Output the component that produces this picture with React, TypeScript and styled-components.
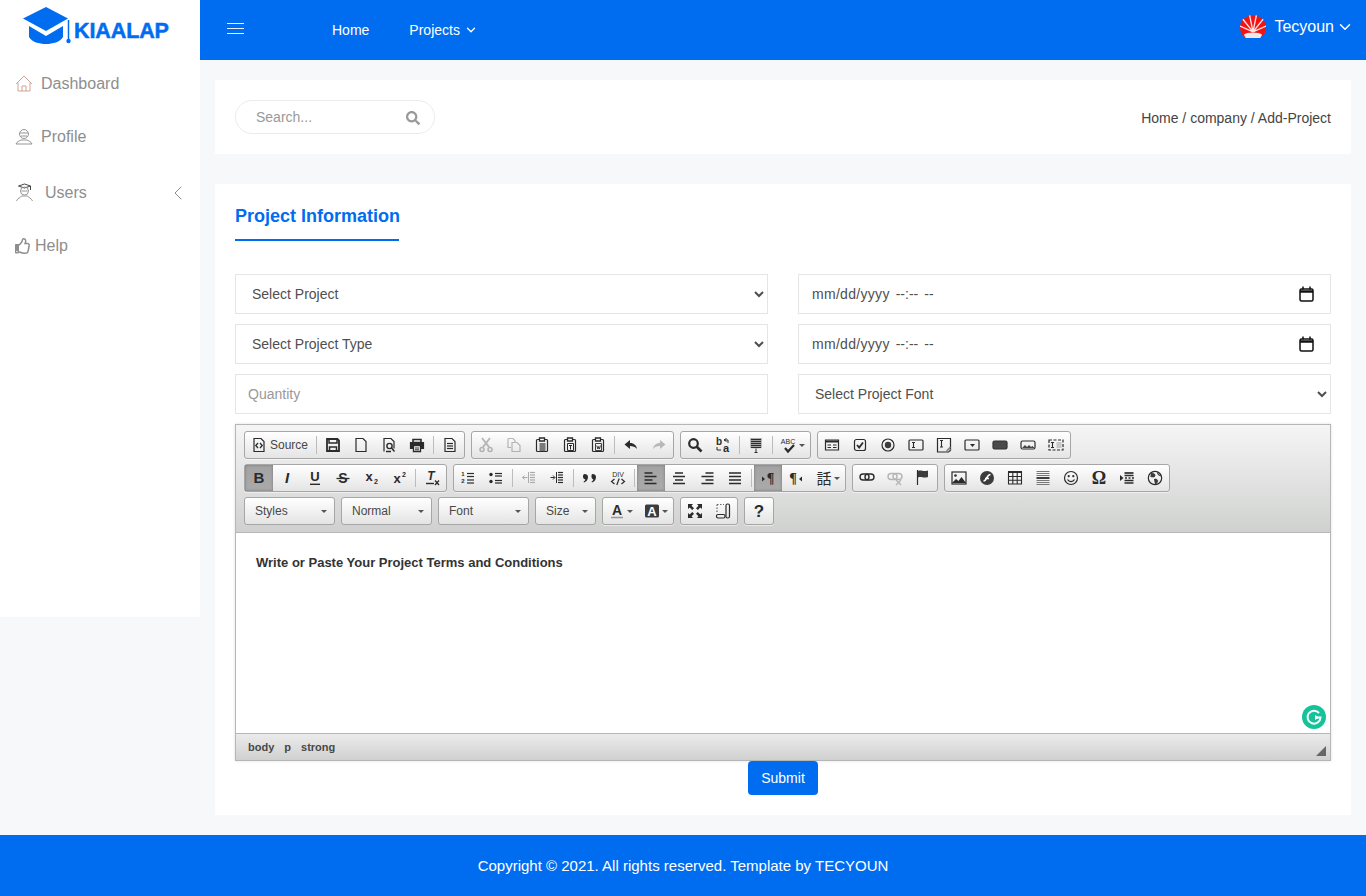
import React from "react";
import styled, { createGlobalStyle } from "styled-components";
import { FaSearch, FaRegThumbsUp } from "react-icons/fa";
import { ChevronDown, ChevronLeft } from "lucide-react";

const GlobalStyle = createGlobalStyle`
	* {
		box-sizing: border-box;
	}
	body {
		margin: 0;
		background-color: #f6f8fa;
		font-family: "Liberation Sans", Arial, sans-serif;
	}
`;

const Layout = styled.div`
	display: grid;
	grid-template-columns: 200px 1fr;
	height: 835px;
`;

const Sidebar = styled.aside`
	height: 617px;
	background-color: #fff;
`;

const LogoBox = styled.div`
	display: flex;
	align-items: center;
	height: 56px;
	padding-left: 22px;
`;

const LogoText = styled.span`
	font-size: 21.5px;
	font-weight: 700;
	color: #006df0;
	letter-spacing: -0.1px;
	margin-top: 7px;
	-webkit-text-stroke: 0.5px #006df0;
`;

const SideItem = styled.a<{ $h: number; $gap: number }>`
	display: flex;
	align-items: center;
	height: ${(p) => p.$h}px;
	padding: 0 15px;
	gap: ${(p) => p.$gap}px;
	font-size: 16px;
	color: #8e8e8e;
`;

const Caret = styled.span`
	margin-left: auto;
	display: flex;
	margin-right: -5px;
	color: #8e8e8e;
`;

const TopBar = styled.header`
	display: flex;
	align-items: center;
	height: 60px;
	padding: 0 15px 0 27px;
	background-color: #006df0;
	color: #fff;
`;

const Burger = styled.span`
	display: block;
	position: relative;
	width: 17px;
	height: 11px;
	margin: -3px 88px 0 0;
	border-top: 1px solid #e6f0fe;
	border-bottom: 1px solid #e6f0fe;
	&::after {
		content: "";
		position: absolute;
		left: 0;
		right: 0;
		top: 4px;
		height: 1px;
		background: #e6f0fe;
	}
`;

const NavLink = styled.a`
	display: flex;
	align-items: center;
	gap: 4px;
	margin-right: 40px;
	font-size: 14px;
	color: #fff;
`;

const User = styled.div`
	display: flex;
	align-items: center;
	margin: -6px -3px 0 auto;
	font-size: 16px;
	gap: 8px;
	svg:last-child {
		margin-left: -6px;
	}
`;

const Main = styled.main`
	padding: 20px 15px;
`;

const SearchCard = styled.section`
	display: flex;
	align-items: center;
	justify-content: space-between;
	height: 74px;
	padding: 0 20px;
	margin-bottom: 30px;
	background-color: #fff;
`;

const SearchBox = styled.div`
	display: flex;
	align-items: center;
	justify-content: space-between;
	width: 200px;
	height: 34px;
	padding: 0 14px 0 20px;
	border: 1px solid #ececec;
	border-radius: 17px;
	font-size: 14px;
	color: #999;
	svg {
		margin-top: 2px;
	}
`;

const SearchInput = styled.input`
	width: 130px;
	border: 0;
	outline: 0;
	padding: 0;
	font: inherit;
	&::placeholder {
		color: #999;
		opacity: 1;
	}
`;

const Crumbs = styled.div`
	margin-top: 2px;
	font-size: 14px;
	color: #444;
`;

const FormCard = styled.section`
	height: 631px;
	padding: 20px;
	background-color: #fff;
`;

const Title = styled.h2`
	width: 164px;
	margin: 0 0 33px;
	padding: 2px 0 14px;
	height: 37px;
	border-bottom: 2px solid #006df0;
	font-size: 18px;
	line-height: 21px;
	font-weight: 700;
	white-space: nowrap;
	color: #006df0;
`;

const FormGrid = styled.div`
	display: grid;
	grid-template-columns: 1fr 1fr;
	column-gap: 30px;
	row-gap: 10px;
`;

const fieldCss = `
	width: 100%;
	height: 40px;
	border: 1px solid #e5e5e5;
	background-color: #fff;
	font-family: "Liberation Sans", Arial, sans-serif;
	font-size: 14px;
	color: #4f4f4f;
	outline: 0;
`;

const Select = styled.select`
	${fieldCss}
	padding: 0 8px 0 12px;
`;

const Input = styled.input`
	${fieldCss}
	padding: 0 12px;
	&::placeholder {
		color: #999;
		opacity: 1;
	}
`;

const DateField = styled.div`
	${fieldCss}
	display: flex;
	align-items: center;
	gap: 6px;
	padding: 0 16px 0 13px;
	svg {
		margin-left: auto;
	}
`;

const DateMask = styled.span`
	letter-spacing: 0.3px;
`;

const Editor = styled.div`
	margin-top: 10px;
	height: 337px;
	display: flex;
	flex-direction: column;
	border: 1px solid #b6b6b6;
	box-shadow: 0 0 3px rgba(0, 0, 0, 0.12);
`;

const Toolbar = styled.div`
	display: flex;
	flex-direction: column;
	gap: 5px;
	height: 108px;
	padding: 6px 8px 0;
	border-bottom: 1px solid #b6b6b6;
	background: linear-gradient(#f5f5f5, #cfd1cf);
`;

const ToolRow = styled.div`
	display: flex;
	gap: 6px;
`;

const Group = styled.div`
	display: flex;
	height: 28px;
	border: 1px solid #a6a6a6;
	border-radius: 3px;
	background: linear-gradient(#fff, #e4e4e4);
	box-shadow: 0 1px 0 rgba(255, 255, 255, 0.5);
`;

const ToolButton = styled.a<{ $w?: number; $active?: boolean; $off?: boolean }>`
	display: flex;
	align-items: center;
	justify-content: center;
	gap: 3px;
	width: ${(p) => p.$w ?? 28}px;
	height: 26px;
	font-size: 12px;
	color: #484848;
	background: ${(p) => (p.$active ? "linear-gradient(#a3a3a3, #a9aaa9)" : "none")};
	box-shadow: ${(p) => (p.$active ? "inset 0 0 3px rgba(0,0,0,.3)" : "none")};
	opacity: ${(p) => (p.$off ? 0.3 : 1)};
	svg {
		overflow: visible;
	}
`;

const Sep = styled.span`
	width: 1px;
	height: 18px;
	margin: 4px 2px;
	background-color: #bcbcbc;
`;

const Combo = styled.a<{ $w: number }>`
	display: flex;
	align-items: center;
	justify-content: space-between;
	width: ${(p) => p.$w}px;
	height: 28px;
	padding: 0 7px 0 10px;
	border: 1px solid #a6a6a6;
	border-radius: 3px;
	background: linear-gradient(#fff, #e4e4e4);
	font-size: 12px;
	color: #484848;
	&::after {
		content: "";
		border: 3px solid transparent;
		border-top-color: #555;
		border-bottom-width: 0;
	}
`;

const Arrow = styled.span`
	margin-left: -1px;
	border: 3px solid transparent;
	border-top-color: #555;
	border-bottom-width: 0;
`;

const Content = styled.div`
	position: relative;
	flex: 1;
	padding: 20px;
	background-color: #fff;
	font-size: 13px;
	line-height: 20px;
	font-weight: 700;
	color: #333;
`;

const Badge = styled.svg`
	position: absolute;
	right: 4px;
	bottom: 4px;
`;

const PathBar = styled.div`
	position: relative;
	display: flex;
	align-items: center;
	gap: 10px;
	height: 27px;
	padding: 0 12px;
	border-top: 1px solid #b6b6b6;
	background: linear-gradient(#ebebeb, #cfd1cf);
	font-size: 11px;
	font-weight: 700;
	color: #484848;
`;

const Grip = styled.span`
	position: absolute;
	right: 4px;
	bottom: 4px;
	border-style: solid;
	border-width: 0 0 10px 10px;
	border-color: transparent transparent #666 transparent;
`;

const SubmitRow = styled.div`
	display: flex;
	justify-content: center;
`;

const Submit = styled.button`
	width: 70px;
	height: 34px;
	border: 0;
	border-radius: 4px;
	background-color: #006df0;
	font-family: inherit;
	font-size: 14px;
	color: #fff;
`;

const Footer = styled.footer`
	display: flex;
	align-items: center;
	justify-content: center;
	height: 61px;
	background-color: #006df0;
	font-size: 15px;
	color: #fff;
`;

const Svg = ({ children, size = 16 }: { children: React.ReactNode; size?: number }) => (
	<svg width={size} height={size} viewBox="0 0 16 16" fill="none" stroke="#2b2b2b" strokeWidth="1.2">
		{children}
	</svg>
);

const serif = "Liberation Serif, serif";
const sans = "Liberation Sans, sans-serif";

const Glyph = ({ t, italic, font = sans, size = 14, x = 8, y = 13, weight = 700 }: { t: string; italic?: boolean; font?: string; size?: number; x?: number; y?: number; weight?: number }) => (
	<text x={x} y={y} textAnchor="middle" fontFamily={font} fontSize={size} fontWeight={weight} fontStyle={italic ? "italic" : "normal"} fill="#2b2b2b" stroke="none">
		{t}
	</text>
);

const Lines = ({ rows, x1, x2 }: { rows: number[]; x1: number; x2: number }) => (
	<>
		{rows.map((y) => (
			<path key={y} d={`M${x1} ${y}H${x2}`} />
		))}
	</>
);

const clipboard = "M5 2.5H3.5c-.8 0-1 .5-1 1v10c0 .5.2 1 1 1h9c.8 0 1-.5 1-1v-10c0-.5-.2-1-1-1H11";

const icons: Record<string, React.ReactNode> = {
	source: (
		<>
			<path d="M3 1.5h7l3 3v10H3z" />
			<path d="M7 6L4.8 8.5 7 11M9 6l2.2 2.5L9 11" strokeWidth="1.3" />
		</>
	),
	save: (
		<>
			<path d="M2 2h10.5L14 3.5V14H2z" strokeWidth="1.8" />
			<path d="M4 2v4h8V2M4.5 14V10h7v4" strokeWidth="1.5" />
		</>
	),
	page: <path d="M3 1.5h7l3 3v10H3z" />,
	preview: (
		<>
			<path d="M3 14.5v-13h7l3 3v7" />
			<circle cx="8.5" cy="9" r="2.6" strokeWidth="1.4" />
			<path d="M10.5 11l3 3.5M5 14.5h5" strokeWidth="1.5" />
		</>
	),
	print: (
		<>
			<path d="M4 2.5h8v3H4z" strokeWidth="1.6" />
			<path d="M1.5 5.5h13v6h-13z" fill="#2b2b2b" />
			<path d="M4.5 8.5h7v6h-7z" fill="#fff" strokeWidth="1.4" />
			<path d="M6 11h4M6 12.8h4" strokeWidth="1" />
		</>
	),
	templates: (
		<>
			<path d="M3 1.5h7l3 3v10H3z" />
			<Lines rows={[6.5, 9, 11.5]} x1={5} x2={11} />
		</>
	),
	cut: (
		<>
			<path d="M4 1l7 9M12 1L5 10" strokeWidth="2" />
			<circle cx="4" cy="12.5" r="2" strokeWidth="1.5" />
			<circle cx="12" cy="12.5" r="2" strokeWidth="1.5" />
		</>
	),
	copy: (
		<>
			<path d="M2 1.5h5l2 2V5M2 1.5v9h3" />
			<path d="M6 5.5h5l3 3v6H6z" />
		</>
	),
	paste: (
		<>
			<path d={clipboard} />
			<path d="M5.5 1h5v3h-5z" fill="#fff" strokeWidth="1.3" />
			<Lines rows={[7, 9, 11, 13]} x1={5.5} x2={11.5} />
		</>
	),
	pasteText: (
		<>
			<path d={clipboard} />
			<path d="M5.5 1h5v3h-5z" fill="#fff" strokeWidth="1.3" />
			<path d="M5.5 6.5h6v7h-6zM7 8.5h3M8.5 8.5v4" strokeWidth="1" />
		</>
	),
	pasteWord: (
		<>
			<path d={clipboard} />
			<path d="M5.5 1h5v3h-5z" fill="#fff" strokeWidth="1.3" />
			<path d="M5.5 6.5h6v7h-6zM6.8 8.5l1 3.5.8-2.5.8 2.5 1-3.5" strokeWidth="0.9" />
		</>
	),
	undo: <path d="M7 3L1.5 7.5 7 12V9c3 0 5 .8 7 3-.5-3.5-3-6-7-6z" fill="#2b2b2b" stroke="none" />,
	redo: <path d="M9 3l5.5 4.5L9 12V9c-3 0-5 .8-7 3 .5-3.5 3-6 7-6z" fill="#b9b9b9" stroke="none" />,
	find: (
		<>
			<circle cx="6.5" cy="6.5" r="4.3" strokeWidth="2.2" />
			<path d="M9.5 9.5l5 5" strokeWidth="2.6" />
		</>
	),
	replace: (
		<>
			<Glyph t="b" size={10} x={4} y={8} />
			<Glyph t="a" size={11} x={11} y={15} />
			<path d="M9 3h4v3M11.5 1.5L9 3l2.5 1.5M2 10v3h4" strokeWidth="1" />
		</>
	),
	selectAll: (
		<>
			<path d="M2 1h12v10H2z" fill="#bbb" stroke="none" />
			<Lines rows={[2.5, 4.5, 6.5, 8.5, 10.5]} x1={3} x2={13} />
			<path d="M8 11.5v4M6.5 15.5h3" strokeWidth="1" />
		</>
	),
	spell: (
		<>
			<Glyph t="ABC" size={7} x={7} y={7} weight={400} />
			<path d="M4 11l3 3.5L13 8" strokeWidth="2.2" />
		</>
	),
	form: (
		<>
			<path d="M1.5 3h13v10h-13z" />
			<path d="M2 4.5h12" strokeWidth="2" />
			<path d="M3.5 8h3.5M9 8h3.5M3.5 10.5h3.5M9 10.5h3.5" />
		</>
	),
	checkbox: (
		<>
			<rect x="2.5" y="2.5" width="11" height="11" rx="2" />
			<path d="M5 8l2.2 2.5L11 5.5" strokeWidth="1.8" />
		</>
	),
	radio: (
		<>
			<circle cx="8" cy="8" r="6" />
			<circle cx="8" cy="8" r="3.2" fill="#3c3c3c" stroke="none" />
		</>
	),
	text: (
		<>
			<rect x="1" y="3" width="14" height="10" rx="1" />
			<path d="M4 5.5h3M4 10.5h3M5.5 5.5v5" strokeWidth="1.1" />
		</>
	),
	textarea: (
		<>
			<path d="M1.5 1.5h13v12l-2 1.5H1.5z" />
			<path d="M4 3.5h3M4 10h3M5.5 3.5V10" strokeWidth="1.1" />
			<path d="M10.5 14l4-4M13 14l2-2" stroke="#777" />
		</>
	),
	select: (
		<>
			<rect x="1" y="3" width="14" height="10" rx="1" />
			<path d="M6 7h5l-2.5 3z" fill="#2b2b2b" stroke="none" />
		</>
	),
	button: <rect x="1" y="4" width="14" height="8" rx="1.5" fill="#4a4a4a" stroke="#333" />,
	imageButton: (
		<>
			<rect x="1" y="4" width="14" height="8" rx="1.5" />
			<path d="M2 11l3-3 2 2 2-2 2 2 1.5-1 2 2z" fill="#444" stroke="none" />
		</>
	),
	hidden: (
		<>
			<rect x="1" y="3" width="14" height="10" strokeDasharray="3 1.5" />
			<path d="M8.5 5h5v6h-5z" fill="#c8c8c8" stroke="none" />
			<path d="M3 5.5h3M3 10.5h3M4.5 5.5v5" strokeWidth="1.1" />
		</>
	),
	bold: <Glyph t="B" size={15} />,
	italic: <Glyph t="I" italic size={15} />,
	underline: (
		<>
			<Glyph t="U" size={13} y={11} />
			<path d="M3 14.3h10" strokeWidth="1.4" />
		</>
	),
	strike: (
		<>
			<Glyph t="S" size={14} />
			<path d="M1.5 8.5h13" strokeWidth="1.3" />
		</>
	),
	sub: (
		<>
			<Glyph t="x" size={13} x={6} y={11} />
			<Glyph t="2" size={7} x={13} y={14} />
		</>
	),
	sup: (
		<>
			<Glyph t="x" size={13} x={6} y={13} />
			<Glyph t="2" size={7} x={13} y={7} />
		</>
	),
	removeFormat: (
		<>
			<Glyph t="T" italic size={12} x={7} y={10} />
			<path d="M2 13.5h8" strokeWidth="1.4" />
			<path d="M11 10.5l4 4.5M15 10.5l-4 4.5" strokeWidth="1.3" />
		</>
	),
	ol: (
		<>
			<Glyph t="1" size={6} x={3} y={6} />
			<Glyph t="2" size={6} x={3} y={13} />
			<Lines rows={[3.5, 6.5, 10, 13]} x1={7} x2={14} />
		</>
	),
	ul: (
		<>
			<circle cx="3" cy="4.5" r="1.7" fill="#2b2b2b" stroke="none" />
			<circle cx="3" cy="11.5" r="1.7" fill="#2b2b2b" stroke="none" />
			<Lines rows={[3.5, 6, 10.5, 13]} x1={7} x2={14} />
		</>
	),
	outdent: (
		<g stroke="#aaa">
			<Lines rows={[2.5, 5, 7.5, 10, 12.5]} x1={9} x2={14} />
			<path d="M1.5 7.5h5M3.5 5.5l-2 2 2 2M7.5 2v11" strokeWidth="1" />
		</g>
	),
	indent: (
		<>
			<Lines rows={[2.5, 5, 7.5, 10, 12.5]} x1={9} x2={14} />
			<path d="M1.5 7.5h4M4 5.5l2 2-2 2M7.5 2v11" strokeWidth="1" />
		</>
	),
	quote: (
		<path d="M2.5 4c2 0 3.5 1 3.5 3 0 3-2 5-4 5.500l-.5-.8c1-.5 1.700-1.500 1.800-2.500C1.500 9 1 7.800 1 6.700 1 5 1.500 4 2.500 4zM10.500 4c2 0 3.500 1 3.500 3 0 3-2 5-4 5.500l-.5-.8c1-.5 1.700-1.500 1.800-2.500-1.300-.2-1.800-1.400-1.800-2.500C9.500 5 9.500 4 10.500 4z" fill="#2b2b2b" stroke="none" />
	),
	div: (
		<>
			<Glyph t="DIV" size={7} y={6.5} weight={400} />
			<path d="M4.5 9l-3 2.5 3 2.5M11.5 9l3 2.5-3 2.500M9.200 8.500L6.800 15" strokeWidth="1.2" />
		</>
	),
	left: <path d="M1.5 3H9.500M1.500 6.500H13.500M1.500 10H9.500M1.500 13.500H13.500" strokeWidth="1.6" />,
	center: <path d="M4 3H12M2 6.500H14M4 10H12M2 13.500H14" strokeWidth="1.6" />,
	right: <path d="M6.500 3H14.500M2.500 6.500H14.500M6.500 10H14.500M2.500 13.500H14.500" strokeWidth="1.6" />,
	justify: <path d="M2 3H14M2 6.500H14M2 10H14M2 13.500H14" strokeWidth="1.7" />,
	ltr: (
		<>
			<path d="M2 6.500l3 2.500-3 2.500z" fill="#2b2b2b" stroke="none" />
			<Glyph t="¶" size={14} x={10.5} y={13} font={serif} />
		</>
	),
	rtl: (
		<>
			<Glyph t="¶" size={14} x={5} y={13} font={serif} />
			<path d="M14 6.500l-3 2.500 3 2.500z" fill="#2b2b2b" stroke="none" />
		</>
	),
	lang: <Glyph t="話" size={15} font="Noto Sans CJK JP, sans-serif" weight={400} y={14} />,
	link: (
		<>
			<rect x="1" y="4" width="9" height="6" rx="3" strokeWidth="1.4" />
			<rect x="6" y="4" width="9" height="6" rx="3" strokeWidth="1.4" />
		</>
	),
	unlink: (
		<g stroke="#b5b5b5">
			<rect x="1" y="3.5" width="9" height="6" rx="3" strokeWidth="1.4" />
			<rect x="6" y="3.5" width="9" height="6" rx="3" strokeWidth="1.4" />
			<path d="M9 10l5 5M14 10l-5 5" strokeWidth="1.4" />
		</g>
	),
	anchor: (
		<>
			<path d="M2.5 0v15" />
			<path d="M3 1c3-1.5 5 1 10-.5V7c-5 1.5-7-1-10 .5z" fill="#3c3c3c" stroke="none" />
		</>
	),
	image: (
		<>
			<rect x="1" y="2" width="14" height="12" />
			<circle cx="4.5" cy="5.5" r="1.3" fill="#2b2b2b" stroke="none" />
			<path d="M1 13l4-4 2.5 2 3-4 4.5 6z" fill="#2b2b2b" stroke="none" />
		</>
	),
	flash: (
		<>
			<circle cx="8" cy="8" r="7" fill="#3c3c3c" stroke="none" />
			<path d="M4.5 11c3.5 0 3-6.5 7-6.5M6 8.5h4" stroke="#fff" strokeWidth="1.7" />
		</>
	),
	table: (
		<>
			<path d="M1 2h14" strokeWidth="2" />
			<path d="M1.5 2v12h13V2M1.5 6.5h13M1.5 10.3h13M5.8 2v12M10.2 2v12" strokeWidth="1.1" />
		</>
	),
	hr: (
		<>
			<g stroke="#777" strokeWidth="1">
				<Lines rows={[1.5, 3.5, 5.5, 10.5, 12.5, 14.5]} x1={1.5} x2={14.5} />
			</g>
			<path d="M1.5 8h13" strokeWidth="1.8" />
		</>
	),
	smiley: (
		<>
			<circle cx="8" cy="8" r="6.5" />
			<circle cx="5.7" cy="6.2" r="1.1" fill="#2b2b2b" stroke="none" />
			<circle cx="10.3" cy="6.2" r="1.1" fill="#2b2b2b" stroke="none" />
			<path d="M4.5 9.5c1.5 2.7 5.5 2.7 7 0" />
		</>
	),
	omega: <Glyph t="Ω" size={18} font={serif} y={14} />,
	pageBreak: (
		<>
			<path d="M1 5l3.5 3L1 11z" fill="#2b2b2b" stroke="none" />
			<path d="M5.5 3h9" strokeWidth="1.7" />
			<path d="M6 8h2M9.5 8h2M13 8h2" strokeWidth="1.6" />
			<path d="M5.5 5.5h9M5.5 10.5h9M5.5 13h9" strokeWidth="1.5" />
		</>
	),
	iframe: (
		<>
			<circle cx="8" cy="8" r="6.7" />
			<path d="M4 3c2 .5 4 .5 4 2.5S5 7 3.5 6.5M7 9.5c2-1 4 0 3.5 2S8 14.5 8 14M10.5 2.5c0 2 1 3 3.5 3.5" fill="#3c3c3c" strokeWidth="0.8" />
		</>
	),
	textColor: (
		<>
			<Glyph t="A" size={14} y={12} />
			<path d="M2 14.5h12" stroke="#999" strokeWidth="1.6" />
		</>
	),
	bgColor: (
		<>
			<rect x="1" y="1.5" width="14" height="13" rx="1.5" fill="#3c3c3c" stroke="none" />
			<text x="8" y="12.500" textAnchor="middle" fontFamily={sans} fontSize="13" fontWeight="700" fill="#fff" stroke="none">A</text>
		</>
	),
	maximize: (
		<path d="M1 1h5L4.500 2.700 7 5.200 5.200 7 2.700 4.500 1 6zM15 1v5l-1.700-1.500L10.800 7 9 5.200l2.500-2.500L10 1zM1 15v-5l1.700 1.500L5.200 9 7 10.800l-2.500 2.500L6 15zM15 15h-5l1.500-1.700L9 10.800 10.800 9l2.500 2.500L15 10z" fill="#2b2b2b" stroke="none" />
	),
	blocks: (
		<>
			<path d="M2 1.5h7M2 1.5v9" strokeDasharray="1.5 1.5" stroke="#666" />
			<rect x="11" y="1" width="3.5" height="14" rx="1.5" />
			<rect x="1.5" y="11.5" width="8.5" height="3.5" rx="1.5" />
		</>
	),
	help: <Glyph t="?" size={17} y={14} />,
};

type Btn = { i?: string; w?: number; active?: boolean; off?: boolean; arrow?: boolean; label?: string };

const SEP = "|";
type Item = Btn | typeof SEP;

const row1: Item[][] = [
	[{ i: "source", w: 69, label: "Source" }, SEP, { i: "save" }, { i: "page" }, { i: "preview" }, { i: "print" }, SEP, { i: "templates" }],
	[{ i: "cut", off: true }, { i: "copy", off: true }, { i: "paste" }, { i: "pasteText" }, { i: "pasteWord" }, SEP, { i: "undo" }, { i: "redo" }],
	[{ i: "find" }, { i: "replace" }, SEP, { i: "selectAll" }, SEP, { i: "spell", w: 35, arrow: true }],
	[{ i: "form" }, { i: "checkbox" }, { i: "radio" }, { i: "text" }, { i: "textarea" }, { i: "select" }, { i: "button" }, { i: "imageButton" }, { i: "hidden" }],
];

const row2: Item[][] = [
	[{ i: "bold", active: true }, { i: "italic" }, { i: "underline" }, { i: "strike" }, { i: "sub" }, { i: "sup" }, SEP, { i: "removeFormat" }],
	[
		{ i: "ol" }, { i: "ul" }, SEP, { i: "outdent" }, { i: "indent" }, SEP, { i: "quote" }, { i: "div" }, SEP,
		{ i: "left", active: true }, { i: "center" }, { i: "right" }, { i: "justify" }, SEP,
		{ i: "ltr", active: true }, { i: "rtl" }, { i: "lang", w: 35, arrow: true },
	],
	[{ i: "link" }, { i: "unlink" }, { i: "anchor" }],
	[{ i: "image" }, { i: "flash" }, { i: "table" }, { i: "hr" }, { i: "smiley" }, { i: "omega" }, { i: "pageBreak" }, { i: "iframe" }],
];

const ToolGroup = ({ items }: { items: Item[] }) => (
	<Group>
		{items.map((it, n) =>
			it === SEP ? (
				<Sep key={n} />
			) : (
				<ToolButton key={n} $w={it.w} $active={it.active} $off={it.off}>
					<Svg>{icons[it.i as string]}</Svg>
					{it.label}
					{it.arrow && <Arrow />}
				</ToolButton>
			),
		)}
	</Group>
);

const Logo = () => (
	<svg width="52" height="42" viewBox="0 0 52 42">
		<path d="M24 0L1 11.5 24 24l22-12.5z" fill="#006df0" />
		<path d="M7 19v11c3 5 10 7 17 7s14-2 17-7V19L24 29z" fill="#006df0" />
		<path d="M46.5 13v19" stroke="#006df0" strokeWidth="1.5" />
		<circle cx="46.5" cy="34" r="2.2" fill="#006df0" />
	</svg>
);

const Huawei = () => (
	<svg width="26" height="24" viewBox="0 0 27 24">
		<path d="M13.5 0C6 0 0 5 0 12c0 6 3 10 6 11h15c3-1 6-5 6-11 0-7-6-12-13.5-12z" fill="#f01414" />
		<path d="M13.5 17L10 0M13.5 17L17 0M13.5 17L3 4M13.5 17L24 4M13.5 17L0 11M13.5 17L27 11" stroke="#ffe4e4" strokeWidth="1.4" />
		<path d="M4 20c3-3 16-3 19 0l-2 3.5H6z" fill="#f1e8e8" />
	</svg>
);

const Calendar = () => (
	<svg width="15" height="16" viewBox="0 0 15 16" fill="none" stroke="#111">
		<rect x="1" y="3" width="13" height="12" rx="1.5" strokeWidth="1.5" />
		<path d="M1 5.5h13" strokeWidth="2.5" />
		<path d="M4 .5v3M11 .5v3" strokeWidth="1.5" />
	</svg>
);

const Thin = ({ children, w = 18 }: { children: React.ReactNode; w?: number }) => (
	<svg width={w} height="20" viewBox="0 0 18 20" fill="none" stroke="#8a8a8a" strokeWidth="0.9">
		{children}
	</svg>
);

const DateInput = () => (
	<DateField>
		<DateMask>mm/dd/yyyy</DateMask>
		<span>--:--</span>
		<span>--</span>
		<Calendar />
	</DateField>
);

function App() {
	return (
		<>
			<GlobalStyle />
			<Layout>
				<Sidebar>
					<LogoBox>
						<Logo />
						<LogoText>KIAALAP</LogoText>
					</LogoBox>
					<SideItem $h={55} $gap={8}>
						<Thin>
							<path d="M1 10l8-8 8 8M3 8.5V17h12V8.5M7 17v-5h4v5" stroke="#c99a8a" />
						</Thin>
						Dashboard
					</SideItem>
					<SideItem $h={52} $gap={8}>
						<Thin>
							<circle cx="9" cy="7" r="4.5" />
							<path d="M5 6h8M6 9h6M1 17c1-3 4-3 5-4h6c1 1 4 1 5 4z" />
						</Thin>
						Profile
					</SideItem>
					<SideItem $h={59} $gap={11}>
						<Thin w={19}>
							<path d="M3 3l6-2 6 2-6 2zM15 3v4" stroke="#333" />
							<circle cx="9" cy="8" r="4" />
							<path d="M6 8h6M1 18c1-3 4-3 5-5h6c1 2 4 2 5 5" />
						</Thin>
						Users
						<Caret>
							<ChevronLeft size={24} strokeWidth={1} />
						</Caret>
					</SideItem>
					<SideItem $h={47} $gap={4}>
						<FaRegThumbsUp size={16} />
						Help
					</SideItem>
				</Sidebar>
				<div>
					<TopBar>
						<Burger />
						<NavLink>Home</NavLink>
						<NavLink>
							Projects
							<ChevronDown size={14} strokeWidth={2.4} />
						</NavLink>
						<User>
							<Huawei />
							Tecyoun
							<ChevronDown size={18} strokeWidth={2} />
						</User>
					</TopBar>
					<Main>
						<SearchCard>
							<SearchBox>
								<SearchInput placeholder="Search..." />
								<FaSearch size={14} color="#999" />
							</SearchBox>
							<Crumbs>Home / company / Add-Project</Crumbs>
						</SearchCard>
						<FormCard>
							<Title>Project Information</Title>
							<FormGrid>
								<Select>
									<option>Select Project</option>
								</Select>
								<DateInput />
								<Select>
									<option>Select Project Type</option>
								</Select>
								<DateInput />
								<Input placeholder="Quantity" />
								<Select>
									<option>Select Project Font</option>
								</Select>
							</FormGrid>
							<Editor>
								<Toolbar>
									<ToolRow>
										{row1.map((items, n) => (
											<ToolGroup key={n} items={items} />
										))}
									</ToolRow>
									<ToolRow>
										{row2.map((items, n) => (
											<ToolGroup key={n} items={items} />
										))}
									</ToolRow>
									<ToolRow>
										<Combo $w={91}>Styles</Combo>
										<Combo $w={91}>Normal</Combo>
										<Combo $w={91}>Font</Combo>
										<Combo $w={61}>Size</Combo>
										<ToolGroup items={[{ i: "textColor", w: 35, arrow: true }, { i: "bgColor", w: 35, arrow: true }]} />
										<ToolGroup items={[{ i: "maximize" }, { i: "blocks" }]} />
										<ToolGroup items={[{ i: "help" }]} />
									</ToolRow>
								</Toolbar>
								<Content>
									Write or Paste Your Project Terms and Conditions
									<Badge width="24" height="24" viewBox="0 0 24 24">
										<circle cx="12" cy="12" r="12" fill="#15c39a" />
										<path d="M17 8a6.5 6.5 0 1 0 1.5 4.5H13" fill="none" stroke="#fff" strokeWidth="2" />
										<path d="M13 10l4 2.5-4 2.5z" fill="#fff" />
									</Badge>
								</Content>
								<PathBar>
									<span>body</span>
									<span>p</span>
									<span>strong</span>
									<Grip />
								</PathBar>
							</Editor>
							<SubmitRow>
								<Submit>Submit</Submit>
							</SubmitRow>
						</FormCard>
					</Main>
				</div>
			</Layout>
			<Footer>Copyright © 2021. All rights reserved. Template by TECYOUN</Footer>
		</>
	);
}

export default App;
